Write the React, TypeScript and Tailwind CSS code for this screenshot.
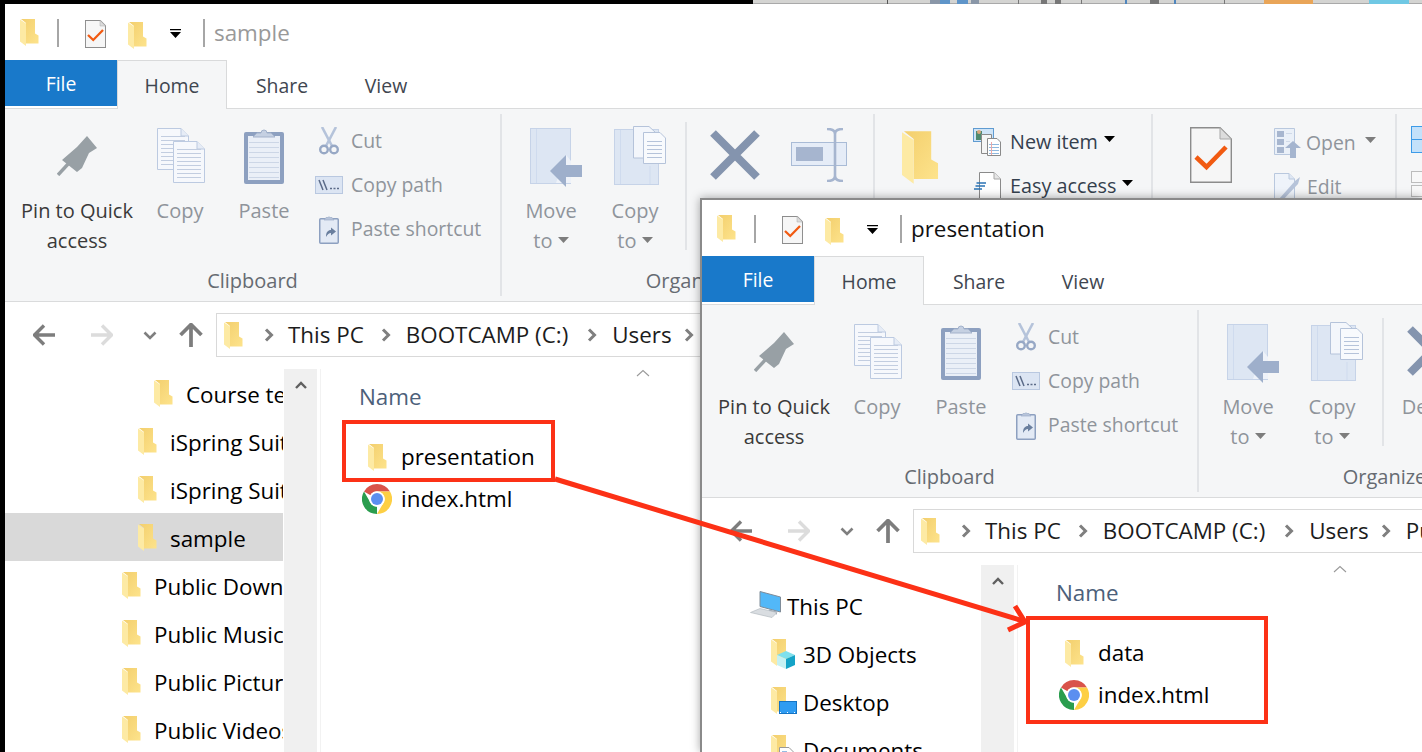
import React from "react";

const Folder = ({ big = false }: { big?: boolean }) => (
  <svg viewBox="0 0 19 27" className={big ? "w-[37px] h-[55px] shrink-0" : "w-[19px] h-[27px] shrink-0"}>
    <defs>
      <linearGradient id="fg" x1="0" y1="0" x2="1" y2="1">
        <stop offset="0" stopColor="#f3cf6d" />
        <stop offset="1" stopColor="#fde38c" />
      </linearGradient>
    </defs>
    <path d="M1 0H15V14.5L18.5 16.5V24.5H6V4L1 0Z" fill="url(#fg)" />
    <path d="M0 0.5L6 4.5V27L0 22.5Z" fill="#fdeaa4" />
  </svg>
);

const DocCheck = ({ big = false }: { big?: boolean }) => (
  <svg viewBox="0 0 42 56" className={big ? "w-[42px] h-[56px] shrink-0" : "w-[21px] h-[28px] shrink-0"}>
    <path d="M0.7 0.7H30L41.3 12V55.3H0.7Z" fill="#f6f6f6" stroke="#8c8c8c" strokeWidth={big ? 1.4 : 2.4} />
    <path d="M30 0.7V12H41.3Z" fill="#dcdcdc" stroke="#a8a8a8" />
    <path d="M6 30L16.5 40L36 20" fill="none" stroke="#f15a11" strokeWidth="4.6" />
  </svg>
);

const Caret = ({ dark = false, w = 11 }: { dark?: boolean; w?: number }) => (
  <svg viewBox="0 0 11 6" width={w} height={(w * 6) / 11} className="inline-block shrink-0 align-[5px]">
    <path d="M0 0H11L5.5 6Z" fill={dark ? "#000" : "#7d7d7d"} />
  </svg>
);

const Pin = () => (
  <svg viewBox="0 0 40 41" className="w-[40px] h-[41px]">
    <path d="M30 1L40 13L32 18L25 33L20 37L5 25L20 12Z" fill="#98a0a5" />
    <path d="M12 28L1 40" stroke="#98a0a5" strokeWidth="3.4" />
  </svg>
);

const Sheet = ({ x, y, w = 32, h = 42 }: { x: number; y: number; w?: number; h?: number }) => {
  const lines: number[] = [];
  for (let ly = y + 8; ly < y + h - 3; ly += 4) lines.push(ly);
  return (
    <g>
      <path d={`M${x + 0.5} ${y + 0.5}H${x + w - 8}L${x + w - 0.5} ${y + 8}V${y + h - 0.5}H${x + 0.5}Z`} fill="#f6f8fc" stroke="#bccae1" />
      <path d={`M${x + w - 8} ${y + 0.5}V${y + 8}H${x + w - 0.5}`} fill="#e6ecf6" stroke="#bccae1" />
      {lines.map((ly) => (
        <path key={ly} d={`M${x + 4} ${ly + 0.5}H${x + w - 4}`} stroke="#c2cde0" />
      ))}
    </g>
  );
};

const CopyIcon = () => (
  <svg viewBox="0 0 48 55" className="w-[48px] h-[55px] ml-[2px]">
    <Sheet x={0} y={0} />
    <Sheet x={16} y={13} />
  </svg>
);

const PasteIcon = () => (
  <svg viewBox="0 0 40 57" className="w-[40px] h-[57px]">
    <rect x="0" y="5" width="40" height="52" rx="2" fill="#8da0c0" />
    <rect x="4" y="9" width="32" height="44" fill="#eaeff7" />
    {[15, 20, 25, 30, 35, 40, 45, 50].map((y) => (
      <path key={y} d={`M5 ${y + 0.5}H35`} stroke="#ccd6e6" />
    ))}
    <path d="M9 10L13 6H17A3 3 0 0 1 23 6H27L31 10Z" fill="#c5d0e2" stroke="#a3b2cb" />
  </svg>
);

const CutIcon = () => (
  <svg viewBox="0 0 20 28" className="w-[20px] h-[28px]" fill="none">
    <path d="M3 0L13 19" stroke="#b5c3da" strokeWidth="2.6" />
    <path d="M17 0L7 19" stroke="#b5c3da" strokeWidth="2.6" />
    <circle cx="5" cy="22.5" r="3.8" stroke="#97a8c5" strokeWidth="2.4" />
    <circle cx="15" cy="22.5" r="3.8" stroke="#97a8c5" strokeWidth="2.4" />
  </svg>
);

const CopyPathIcon = () => (
  <svg viewBox="0 0 28 18" className="w-[28px] h-[18px]" fill="none">
    <rect x="0.5" y="0.5" width="27" height="17" fill="#dce5f3" stroke="#b9c8e0" />
    <path d="M4 4L8 14M8 4L12 14" stroke="#5b6b88" strokeWidth="1.5" />
    <path d="M15 12.5H17M18.5 12.5H20.5M22 12.5H24" stroke="#5b6b88" strokeWidth="1.6" />
  </svg>
);

const PasteShortcutIcon = () => (
  <svg viewBox="0 0 20 29" className="w-[20px] h-[29px]">
    <rect x="0.75" y="3.75" width="18.5" height="24.5" rx="1" fill="#e3eaf5" stroke="#8da0c0" strokeWidth="1.5" />
    <path d="M5 5L7 2.5H9A1.2 1.2 0 0 1 11 2.5H13L15 5Z" fill="#b7c4da" stroke="#9cadc8" strokeWidth="0.7" />
    <path d="M7 22C7 17 9 15 12 15V12.5L17 16.5L12 20.5V18C10 18 8.5 19.5 7 22Z" fill="#6a7f9e" />
  </svg>
);

const MoveIcon = () => (
  <svg viewBox="0 0 52 59" className="w-[52px] h-[59px] ml-[10px] mt-[4px]">
    <rect x="0.5" y="0.5" width="40" height="55" fill="#dde6f3" stroke="#c6d3e8" />
    <path d="M6.5 1V55" stroke="#cfdbee" />
    <path d="M36 27L41 33V55H26Z" fill="#eef2f9" />
    <path d="M20 43L36 27V37H52V49H36V59Z" fill="#9eafcb" />
  </svg>
);

const CopyToIcon = () => (
  <svg viewBox="0 0 52 59" className="w-[52px] h-[59px] ml-[10px]">
    <rect x="0.5" y="3.5" width="44" height="55" fill="#dde6f3" stroke="#c6d3e8" />
    <path d="M6.5 4V58M36 40V58" stroke="#cfdbee" />
    <path d="M19.5 0.5H35L41 6V32H19.5Z" fill="#f3f6fb" stroke="#b5c3da" />
    <path d="M29.5 6.5H46L51.5 12V37.5H29.5Z" fill="#f8fafd" stroke="#b5c3da" />
    {[15, 19, 23, 27, 31].map((y) => (
      <path key={y} d={`M33 ${y + 0.5}H48`} stroke="#b5c3da" />
    ))}
  </svg>
);

const DeleteIcon = () => (
  <svg viewBox="0 0 50 50" className="w-[50px] h-[50px]">
    <path d="M3 3L47 47M47 3L3 47" stroke="#8494ae" strokeWidth="8" />
  </svg>
);

const RenameIcon = () => (
  <svg viewBox="0 0 56 54" className="w-[56px] h-[54px]" fill="none">
    <rect x="0.5" y="14.5" width="55" height="23" fill="#e5ecf7" stroke="#a9bbd6" />
    <rect x="5" y="19" width="27" height="14" fill="#a6b5cf" />
    <path d="M36 1C40 1 44 2 44 6V48C44 52 40 53 36 53M52 1C48 1 44 2 44 6M44 48C44 52 48 53 52 53" stroke="#a6b5cf" strokeWidth="2.6" />
  </svg>
);

const NewItemIcon = () => (
  <svg viewBox="0 0 28 28" className="w-[28px] h-[28px]">
    <rect x="0.5" y="0.5" width="20" height="13" fill="#cfe4f7" stroke="#5f9bd1" />
    <rect x="3" y="3" width="6" height="9" fill="#4e8a70" />
    <circle cx="6" cy="4" r="2" fill="#d9a77e" />
    <path d="M8.5 6.5H18.5V25.5H8.5Z" fill="#f5f5f5" stroke="#8a8a8a" />
    <path d="M14.5 10.5H24L27.5 14V27.5H14.5Z" fill="#fff" stroke="#8a8a8a" />
    <path d="M16 16.5H26M16 19.5H26M16 22.5H26M16 25.5H26" stroke="#8fb8de" />
    <path d="M18.5 14V27" stroke="#eba8a8" />
  </svg>
);

const EasyIcon = () => (
  <svg viewBox="0 0 27 28" className="w-[27px] h-[28px]">
    <path d="M5.5 0.5H20L26.5 7V27.5H5.5Z" fill="#fff" stroke="#8a8a8a" />
    <path d="M20 0.5V7H26.5" fill="#e6e6e6" stroke="#a8a8a8" />
    <path d="M2.5 11H12M1.5 14H11M0 17H8" stroke="#2a73b5" strokeWidth="1.4" />
  </svg>
);

const OpenIcon = () => (
  <svg viewBox="0 0 27 30" className="w-[27px] h-[30px]">
    <path d="M0.5 0.5H20.5V26.5H0.5Z" fill="#eaf0f8" stroke="#b9c8de" />
    <rect x="3" y="3" width="7" height="6" fill="#a7b6cf" />
    <rect x="3" y="11" width="7" height="6" fill="#a7b6cf" />
    <rect x="3" y="19" width="7" height="6" fill="#a7b6cf" />
    <path d="M12 5.5H18M12 13.5H16" stroke="#cfd9e8" />
    <path d="M11 20L19 13L27 20H22V30H16V20Z" fill="#a5b5cf" />
  </svg>
);

const EditIcon = () => (
  <svg viewBox="0 0 27 28" className="w-[27px] h-[28px]">
    <path d="M0.5 0.5H15L20.5 6V27.5H0.5Z" fill="#eef3fa" stroke="#b9c8de" />
    <path d="M15 0.5V6H20.5" fill="#dfe7f3" stroke="#b9c8de" />
    <path d="M5 26L21 8L26 4L24 11L8 28Z" fill="#b6c3d9" />
  </svg>
);

const SelectIcon = () => (
  <svg viewBox="0 0 40 27" className="w-[40px] h-[27px]">
    <rect x="0.5" y="0.5" width="39" height="26" fill="#c3e1fa" stroke="#3d9be8" />
    <path d="M0 13.5H40" stroke="#3d9be8" />
  </svg>
);

const SelectIcon2 = () => (
  <svg viewBox="0 0 40 27" className="w-[40px] h-[27px]">
    <rect x="0.5" y="0.5" width="39" height="11" fill="#f8f8f8" stroke="#bcbcbc" />
    <rect x="0.5" y="14.5" width="39" height="11" fill="#f8f8f8" stroke="#bcbcbc" />
  </svg>
);

const Arrow = ({ dir, color }: { dir: "left" | "right" | "up"; color: string }) => (
  <svg
    viewBox="0 0 22 22"
    className={
      dir === "right"
        ? "w-[22px] h-[22px] shrink-0 rotate-180"
        : dir === "up"
          ? "w-[22px] h-[22px] shrink-0 rotate-90 scale-110"
          : "w-[22px] h-[22px] shrink-0"
    }
    fill="none"
  >
    <path d="M1 11H22M11 1.5L1.5 11L11 20.5" stroke={color} strokeWidth="3.4" />
  </svg>
);

const Chev = ({ color = "#7f7f7f" }: { color?: string }) => (
  <svg viewBox="0 0 10 14" className="w-[10px] h-[14px] shrink-0" fill="none">
    <path d="M2 1.5L7.5 7L2 12.5" stroke={color} strokeWidth="3" />
  </svg>
);

const Chrome = () => (
  <svg viewBox="0 0 30 30" className="w-[30px] h-[30px] shrink-0">
    <path d="M15 0A15 15 0 0 1 28 7.5H15A7.5 7.5 0 0 0 8.5 11.25L2 7.5A15 15 0 0 1 15 0Z" fill="#d9534a" />
    <path d="M2 7.5L8.5 18.75A7.5 7.5 0 0 0 15 22.5L15 30A15 15 0 0 1 2 7.5Z" fill="#2a9d4e" />
    <path d="M28 7.5A15 15 0 0 1 15 30L21.5 18.75A7.5 7.5 0 0 0 21.5 11.25L15 7.5Z" fill="#fdcf44" />
    <circle cx="15" cy="15" r="7.8" fill="#fff" />
    <circle cx="15" cy="15" r="6" fill="#5b8ff0" />
  </svg>
);

const PC = () => (
  <svg viewBox="0 0 31 28" className="w-[31px] h-[28px] shrink-0">
    <path d="M10 0.5L30.5 6V21L10 15.5Z" fill="#52b8f8" stroke="#7f8c99" strokeWidth="1" />
    <path d="M19 18.5V21.5L27 23.5V20.5Z" fill="#9aa5b1" />
    <path d="M0.5 21.5L10 17.5L27 21.5L22 26.5Z" fill="#d9dde1" stroke="#b5bbc2" strokeWidth="0.7" />
  </svg>
);

const Obj3D = () => (
  <span className="relative w-[23px] h-[28px] shrink-0 block">
    <Folder />
    <svg viewBox="0 0 18 18" className="w-[18px] h-[18px] absolute left-[6px] top-[12px]">
      <path d="M9 0L18 4L9 8L0 4Z" fill="#7fe0ec" />
      <path d="M0 4L9 8V18L0 14Z" fill="#c6f1f3" />
      <path d="M18 4L9 8V18L18 14Z" fill="#15a3c7" />
    </svg>
  </span>
);

const DesktopIc = () => (
  <span className="relative w-[26px] h-[28px] shrink-0 block">
    <Folder />
    <svg viewBox="0 0 18 13" className="w-[18px] h-[13px] absolute left-[8px] top-[14px]">
      <rect x="0.5" y="0.5" width="17" height="12" fill="#2f9cf2" stroke="#1574c4" />
      <path d="M1 11.5H17" stroke="#fff" strokeDasharray="1 6" />
    </svg>
  </span>
);

const DocsIc = () => (
  <span className="relative w-[26px] h-[28px] shrink-0 block">
    <Folder />
    <svg viewBox="0 0 15 17" className="w-[15px] h-[17px] absolute left-[8px] top-[12px]">
      <path d="M0.5 0.5H10L14.5 5V16.5H0.5Z" fill="#fff" stroke="#9a9a9a" />
      <path d="M3 5H8M3 8H12M3 11H12" stroke="#2a78c5" />
    </svg>
  </span>
);

const Large = ({ icon, children, w, dim = true }: { icon: React.ReactNode; children?: React.ReactNode; w: string; dim?: boolean }) => (
  <div className={`${w} shrink-0 flex flex-col items-center`}>
    <div className="h-[82px] flex items-center justify-center">{icon}</div>
    <div className={`text-center text-[20px] leading-[30px] whitespace-nowrap ${dim ? "text-[#8f949b]" : "text-[#3a3a3a]"}`}>{children}</div>
  </div>
);

const Small = ({ icon, text, caret, dark, gap }: { icon: React.ReactNode; text: string; caret?: React.ReactNode; dark?: boolean; gap: string }) => (
  <div className="h-[44px] flex items-center">
    <div className="w-[28px] flex justify-center shrink-0">{icon}</div>
    <span className={`${gap} whitespace-nowrap ${dark ? "text-[#34404e] text-[19.8px]" : "text-[#8f949b]"}`}>{text}</span>
    {caret}
  </div>
);

const Group = ({ w, label, children }: { w: string; label?: string; children: React.ReactNode }) => (
  <div className={`${w} shrink-0 h-[182px] border-r-2 border-[#e2e4e7] flex flex-col`}>
    <div className="flex h-[150px]">{children}</div>
    <div className="h-[32px] pt-[1px] text-[20px] leading-[32px] text-center text-[#666b72]">{label}</div>
  </div>
);

const Ribbon = () => (
  <div className="h-[193px] bg-[#f5f6f7] border-b border-[#dadbdc] pt-[5px] flex">
    <Group w="w-[497px]" label="Clipboard">
      <Large w="w-[144px]" dim={false} icon={<Pin />}>
        Pin to Quick
        <br />
        access
      </Large>
      <Large w="w-[62px]" icon={<CopyIcon />}>Copy</Large>
      <Large w="w-[106px]" icon={<PasteIcon />}>Paste</Large>
      <div className="-ml-[2px] pt-[5px] flex flex-col">
        <Small gap="ml-[8px]" icon={<CutIcon />} text="Cut" />
        <Small gap="ml-[8px]" icon={<CopyPathIcon />} text="Copy path" />
        <Small gap="ml-[8px]" icon={<PasteShortcutIcon />} text="Paste shortcut" />
      </div>
    </Group>
    <Group w="w-[373px]" label="Organize">
      <Large w="w-[98px]" icon={<MoveIcon />}>
        Move
        <br />
        to <Caret />
      </Large>
      <Large w="w-[70px]" icon={<CopyToIcon />}>
        Copy
        <br />
        to <Caret />
      </Large>
      <div className="w-[2px] h-[128px] ml-[15px] mt-[8px] bg-[#e2e4e7]" />
      <Large w="w-[96px]" icon={<DeleteIcon />}>Delete</Large>
      <Large w="w-[72px]" icon={<RenameIcon />}>Rename</Large>
    </Group>
    <Group w="w-[278px]" label="New">
      <Large w="w-[90px]" icon={<div className="mt-[4px]"><Folder big /></div>} />
      <div className="pt-[6px] pl-[8px] flex flex-col">
        <Small gap="ml-[9px]" dark icon={<NewItemIcon />} text="New item" caret={<span className="ml-[6px] -mt-[6px] flex"><Caret dark /></span>} />
        <Small gap="ml-[9px]" dark icon={<EasyIcon />} text="Easy access" caret={<span className="ml-[6px] -mt-[6px] flex"><Caret dark /></span>} />
      </div>
    </Group>
    <Group w="w-[244px]" label="Open">
      <Large w="w-[114px]" icon={<div className="ml-[2px]"><DocCheck big /></div>} />
      <div className="pt-[7px] pl-[6px] flex flex-col">
        <Small gap="ml-[5px]" icon={<OpenIcon />} text="Open" caret={<span className="ml-[9px] -mt-[6px] flex"><Caret /></span>} />
        <Small gap="ml-[6px]" icon={<EditIcon />} text="Edit" />
      </div>
    </Group>
    <div className="pl-[14px] pt-[12px] flex flex-col gap-[18px]">
      <SelectIcon />
      <SelectIcon2 />
    </div>
  </div>
);

type NavItem = { label: string; pad: string; icon: React.ReactNode; sel?: boolean };

const Win = ({
  title,
  active,
  nav,
  navPad,
  files,
}: {
  title: string;
  active: boolean;
  nav: NavItem[];
  navPad: string;
  files: { label: string; icon: React.ReactNode }[];
}) => (
  <div className="w-[1417px] shrink-0 bg-white flex flex-col h-[748px]">
    <div className="h-[56px] flex items-center shrink-0">
      <div className="ml-[15px]"><Folder /></div>
      <div className="w-[2px] h-[28px] ml-[18px] mt-[2px] bg-[#a6a6a6]" />
      <div className="ml-[26px] mt-[4px]"><DocCheck /></div>
      <div className="ml-[22px] mt-[6px]"><Folder /></div>
      <svg viewBox="0 0 11 9" className="w-[11px] h-[9px] ml-[23px] mt-[3px]">
        <path d="M0 0H11V1.2H0ZM0 3H11L5.5 9Z" fill="#000" />
      </svg>
      <div className="w-[2px] h-[28px] ml-[22px] mt-[2px] bg-[#a6a6a6]" />
      <span className={`ml-[9px] mt-[2px] text-[22.4px] ${active ? "text-[#111]" : "text-[#999]"}`}>{title}</span>
    </div>
    <div className="h-[49px] border-b border-[#dadbdc] flex items-start shrink-0">
      <div className="w-[112px] h-[46px] pt-[1px] bg-[#1979ca] text-white flex items-center justify-center">File</div>
      <div className="w-[110px] h-[49px] pt-[2px] bg-[#f5f6f7] border-x border-t border-[#d9dadb] text-[#3f4650] flex items-center justify-center">Home</div>
      <div className="w-[110px] h-[48px] pt-[3px] text-[#3f4650] flex items-center justify-center">Share</div>
      <div className="w-[98px] h-[48px] pt-[3px] text-[#3f4650] flex items-center justify-center">View</div>
    </div>
    <Ribbon />
    <div className="h-[67px] flex items-start pt-[11px] shrink-0">
      <div className="h-[44px] flex items-center">
        <div className="ml-[28px] flex"><Arrow dir="left" color="#7d7d7d" /></div>
        <div className="ml-[36px] flex"><Arrow dir="right" color="#dcdcdc" /></div>
        <svg viewBox="0 0 14 9" className="w-[14px] h-[9px] ml-[30px]" fill="none">
          <path d="M1.5 1.5L7 7L12.5 1.5" stroke="#7f7f7f" strokeWidth="2.6" />
        </svg>
        <div className="ml-[23px] flex"><Arrow dir="up" color="#7d7d7d" /></div>
      </div>
      <div className="ml-[14px] w-[1187px] h-[44px] border border-[#d9d9d9] flex items-center text-[#1c1c1c] whitespace-nowrap text-[22.4px]">
        <div className="ml-[7px]"><Folder /></div>
        <div className="ml-[21px]"><Chev /></div>
        <span className="ml-[14px]">This PC</span>
        <div className="ml-[17px]"><Chev /></div>
        <span className="ml-[15px]">BOOTCAMP (C:)</span>
        <div className="ml-[19px]"><Chev /></div>
        <span className="ml-[15px]">Users</span>
        <div className="ml-[12px]"><Chev /></div>
        <span className="ml-[15px]">Public</span>
      </div>
    </div>
    <div className="flex-1 flex min-h-0 text-[22.4px]">
      <div className={`w-[278px] shrink-0 overflow-hidden ${navPad}`}>
        {nav.map((n) => (
          <div key={n.label} className={`h-[48px] flex items-center whitespace-nowrap text-black ${n.pad} ${n.sel ? "bg-[#d9d9d9]" : ""}`}>
            {n.icon}
            <span className="mt-[5px]">{n.label}</span>
          </div>
        ))}
      </div>
      <div className="w-[1px] shrink-0" />
      <div className="w-[33px] bg-[#f0f0f0] shrink-0 flex justify-center pt-[12px]">
        <svg viewBox="0 0 12 8" className="w-[12px] h-[8px]" fill="none">
          <path d="M1 7L6 2L11 7" stroke="#606060" strokeWidth="2.4" />
        </svg>
      </div>
      <div className="w-[3px] shrink-0" />
      <div className="w-[1px] bg-[#f2f2f2] shrink-0" />
      <div className="flex-1 flex flex-col">
        <div className="h-[13px] pl-[315px]">
          <svg viewBox="0 0 14 8" className="w-[14px] h-[8px]" fill="none">
            <path d="M1 7L7 1.5L13 7" stroke="#9a9a9a" strokeWidth="1.1" />
          </svg>
        </div>
        <div className="h-[30px] leading-[30px] pl-[38px] text-[#4c607a]">Name</div>
        <div className="mt-[24px]">
          {files.map((f) => (
            <div key={f.label} className="h-[42px] flex items-center pl-[40px] text-black">
              <div className="w-[32px] flex justify-center">{f.icon}</div>
              <span className="ml-[8px]">{f.label}</span>
            </div>
          ))}
        </div>
      </div>
    </div>
  </div>
);

const nav1: NavItem[] = [
  { label: "Course templates", pad: "pl-[149px]", icon: <span className="mr-[13px]"><Folder /></span> },
  { label: "iSpring Suite 8", pad: "pl-[133px]", icon: <span className="mr-[13px]"><Folder /></span> },
  { label: "iSpring Suite 9", pad: "pl-[133px]", icon: <span className="mr-[13px]"><Folder /></span> },
  { label: "sample", pad: "pl-[133px]", icon: <span className="mr-[13px]"><Folder /></span>, sel: true },
  { label: "Public Downloads", pad: "pl-[117px]", icon: <span className="mr-[13px]"><Folder /></span> },
  { label: "Public Music", pad: "pl-[117px]", icon: <span className="mr-[13px]"><Folder /></span> },
  { label: "Public Pictures", pad: "pl-[117px]", icon: <span className="mr-[13px]"><Folder /></span> },
  { label: "Public Videos", pad: "pl-[117px]", icon: <span className="mr-[13px]"><Folder /></span> },
];

const nav2: NavItem[] = [
  { label: "This PC", pad: "pl-[48px]", icon: <span className="mr-[6px]"><PC /></span> },
  { label: "3D Objects", pad: "pl-[69px]", icon: <span className="mr-[9px]"><Obj3D /></span> },
  { label: "Desktop", pad: "pl-[69px]", icon: <span className="mr-[6px]"><DesktopIc /></span> },
  { label: "Documents", pad: "pl-[69px]", icon: <span className="mr-[6px]"><DocsIc /></span> },
];

export default function App() {
  return (
    <div className="relative w-[1422px] h-[752px] overflow-hidden bg-white font-['Open_Sans','Noto_Sans',sans-serif] text-[19.4px] leading-none">
      <div className="h-[4px] flex">
        <div className="w-[753px] bg-black" />
        <svg viewBox="0 0 669 4" className="w-[669px] h-[4px]">
          <rect width="669" height="4" fill="#d4d4d2" />
          <rect width="669" height="1" y="3" fill="#a9a9a9" />
          <rect x="134" width="1" height="4" fill="#555" />
          <rect x="177" width="10" height="4" fill="#8a97a8" />
          <rect x="187" width="10" height="4" fill="#5f95c9" />
          <rect x="204" width="11" height="4" fill="#5f95c9" />
          <rect x="218" width="8" height="4" fill="#8a97a8" />
          <rect x="265" width="1" height="4" fill="#777" />
          <rect x="288" width="6" height="4" fill="#777" />
          <rect x="302" width="6" height="4" fill="#777" />
          <rect x="328" width="1" height="4" fill="#777" />
          <rect x="372" width="2" height="4" fill="#4f86bd" />
          <rect x="397" width="9" height="4" fill="#777" />
          <rect x="421" width="2" height="4" fill="#4f86bd" />
          <rect x="471" width="1" height="4" fill="#777" />
          <rect x="511" width="49" height="4" fill="#e9a558" />
          <rect x="616" width="40" height="4" fill="#6fc8e4" />
        </svg>
      </div>
      <div className="flex">
        <div className="w-[5px] shrink-0 bg-black h-[748px]" />
        <Win
          title="sample"
          active={false}
          nav={nav1}
          navPad=""
          files={[
            { label: "presentation", icon: <Folder /> },
            { label: "index.html", icon: <Chrome /> },
          ]}
        />
      </div>

      <div className="absolute left-[700px] top-[198px] w-[722px] h-[554px] overflow-hidden border-l-2 border-t-2 border-[#8a8a8a] bg-white shadow-[0_0_9px_rgba(0,0,0,0.35)]">
        <Win
          title="presentation"
          active
          nav={nav2}
          navPad="pt-[16px]"
          files={[
            { label: "data", icon: <Folder /> },
            { label: "index.html", icon: <Chrome /> },
          ]}
        />
      </div>

      <div className="absolute left-[342px] top-[420px] w-[213px] h-[62px] border-4 border-[#fc3116]" />
      <div className="absolute left-[1026px] top-[616px] w-[242px] h-[108px] border-4 border-[#fc3116]" />
      <svg viewBox="0 0 1422 752" className="absolute left-0 top-0 w-[1422px] h-[752px] pointer-events-none" fill="none">
        <path d="M555 479L1023 621" stroke="#fc3116" strokeWidth="5" />
        <path d="M1015 606L1025 622L1008 630" stroke="#fc3116" strokeWidth="5" />
      </svg>
    </div>
  );
}
